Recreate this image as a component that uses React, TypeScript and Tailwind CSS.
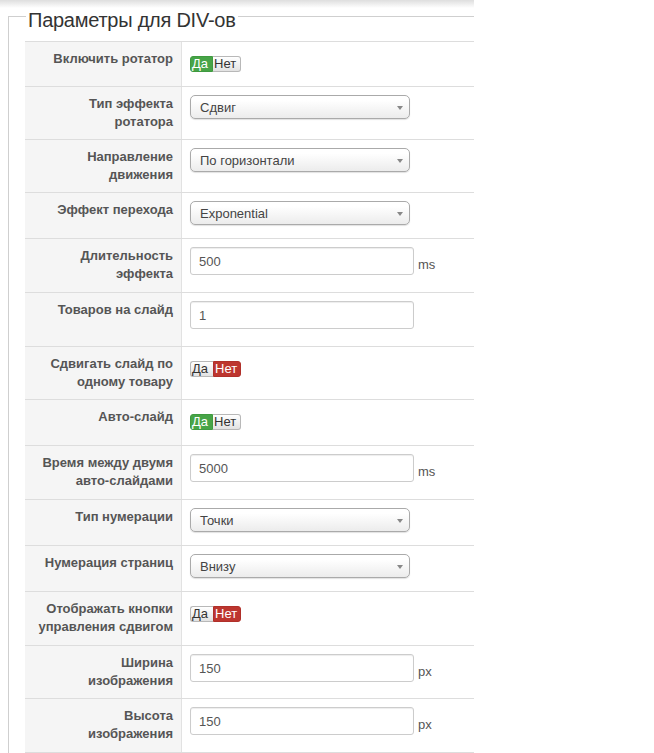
import React from 'react';

type Row = {
  label: string[];
  h: string;
  type: 'toggle' | 'select' | 'input';
  value: string;
  unit?: string;
  last?: boolean;
};

const rows: Row[] = [
  { label: ['Включить ротатор'], h: 'h-[45px]', type: 'toggle', value: 'yes' },
  { label: ['Тип эффекта', 'ротатора'], h: 'h-[53px]', type: 'select', value: 'Сдвиг' },
  { label: ['Направление', 'движения'], h: 'h-[53px]', type: 'select', value: 'По горизонтали' },
  { label: ['Эффект перехода'], h: 'h-[46px]', type: 'select', value: 'Exponential' },
  { label: ['Длительность', 'эффекта'], h: 'h-[54px]', type: 'input', value: '500', unit: 'ms' },
  { label: ['Товаров на слайд'], h: 'h-[54px]', type: 'input', value: '1' },
  { label: ['Сдвигать слайд по', 'одному товару'], h: 'h-[53px]', type: 'toggle', value: 'no' },
  { label: ['Авто-слайд'], h: 'h-[46px]', type: 'toggle', value: 'yes' },
  { label: ['Время между двумя', 'авто-слайдами'], h: 'h-[54px]', type: 'input', value: '5000', unit: 'ms' },
  { label: ['Тип нумерации'], h: 'h-[46px]', type: 'select', value: 'Точки' },
  { label: ['Нумерация страниц'], h: 'h-[46px]', type: 'select', value: 'Внизу' },
  { label: ['Отображать кнопки', 'управления сдвигом'], h: 'h-[54px]', type: 'toggle', value: 'no' },
  { label: ['Ширина', 'изображения'], h: 'h-[53px]', type: 'input', value: '150', unit: 'px' },
  { label: ['Высота', 'изображения'], h: 'h-[55px]', type: 'input', value: '150', unit: 'px', last: true },
];

const inactive =
  'bg-linear-to-b from-white to-[#e2e2e2] text-[#333] border-[#b8b8b8]';

function Toggle({ yes }: { yes: boolean }) {
  return (
    <div className="flex h-[16px] text-[13px] leading-[14px]">
      <span
        className={
          'w-[23px] pl-[1px] border rounded-l-[3px] ' +
          (yes ? 'bg-[#47a447] border-[#3f9a3f] text-white' : inactive + ' border-r-0')
        }
      >
        Да
      </span>
      <span
        className={
          'w-[28px] pl-[1px] border rounded-r-[3px] ' +
          (!yes ? 'bg-[#bd362f] border-[#b0302a] text-white' : inactive + ' border-l-0')
        }
      >
        Нет
      </span>
    </div>
  );
}

function Select({ value }: { value: string }) {
  return (
    <div className="flex items-center w-[220px] h-[24px] border border-[#aaa] rounded-[5px] bg-linear-to-b from-white from-20% to-[#ececec] shadow-[0_1px_1px_rgba(0,0,0,0.12)] pl-[9px] pr-[6px] pt-[1px] text-[13px] text-[#444]">
      <span className="flex-1">{value}</span>
      <svg width="6" height="4" viewBox="0 0 6 4">
        <path d="M0 0H6L3 4Z" fill="#888" />
      </svg>
    </div>
  );
}

function Input({ value, unit }: { value: string; unit?: string }) {
  return (
    <div className="flex items-start">
      <input
        readOnly
        defaultValue={value}
        className="w-[224px] h-[28px] border border-[#ccc] rounded-[3px] shadow-[inset_0_1px_1px_rgba(0,0,0,0.075)] pl-[8px] text-[13px] text-[#555] bg-white outline-none font-['Liberation_Sans',Arial,sans-serif]"
      />
      {unit && (
        <span className="ml-[4px] mt-[9px] text-[13px] leading-[18px] text-[#555]">{unit}</span>
      )}
    </div>
  );
}

export default function App() {
  return (
    <div className="w-[654px] h-[753px] bg-white overflow-hidden font-['Liberation_Sans',Arial,sans-serif]">
      <div className="h-[8px] w-[474px] bg-linear-to-b from-[#dedede] to-white" />
      <div className="mt-[8px] ml-[8px] w-[466px] border-l border-t border-[#cfcfcf]">
        <div className="-mt-[8px] ml-[17px] w-fit bg-white px-[2px] text-[20px] leading-[22px] tracking-[-0.25px] text-[#333]">
          Параметры для DIV-ов
        </div>
        <div className="mt-[10px] ml-[16px] w-[449px]">
          {rows.map((r, i) => (
            <div
              key={i}
              className={
                'flex border-t border-[#ddd] ' + r.h + (r.last ? ' border-b' : '')
              }
            >
              <div className="w-[157px] shrink-0 bg-[#f5f5f5] border-r border-[#e2e2e2] pt-[8px] pr-[8px] text-right font-bold text-[13px] leading-[18px] text-[#555]">
                {r.label.map((l, j) => (
                  <div key={j}>{l}</div>
                ))}
              </div>
              <div
                className={
                  'flex-1 pl-[8px] ' + (r.type === 'toggle' ? 'pt-[14px]' : 'pt-[8px]')
                }
              >
                {r.type === 'toggle' && <Toggle yes={r.value === 'yes'} />}
                {r.type === 'select' && <Select value={r.value} />}
                {r.type === 'input' && <Input value={r.value} unit={r.unit} />}
              </div>
            </div>
          ))}
        </div>
      </div>
    </div>
  );
}
